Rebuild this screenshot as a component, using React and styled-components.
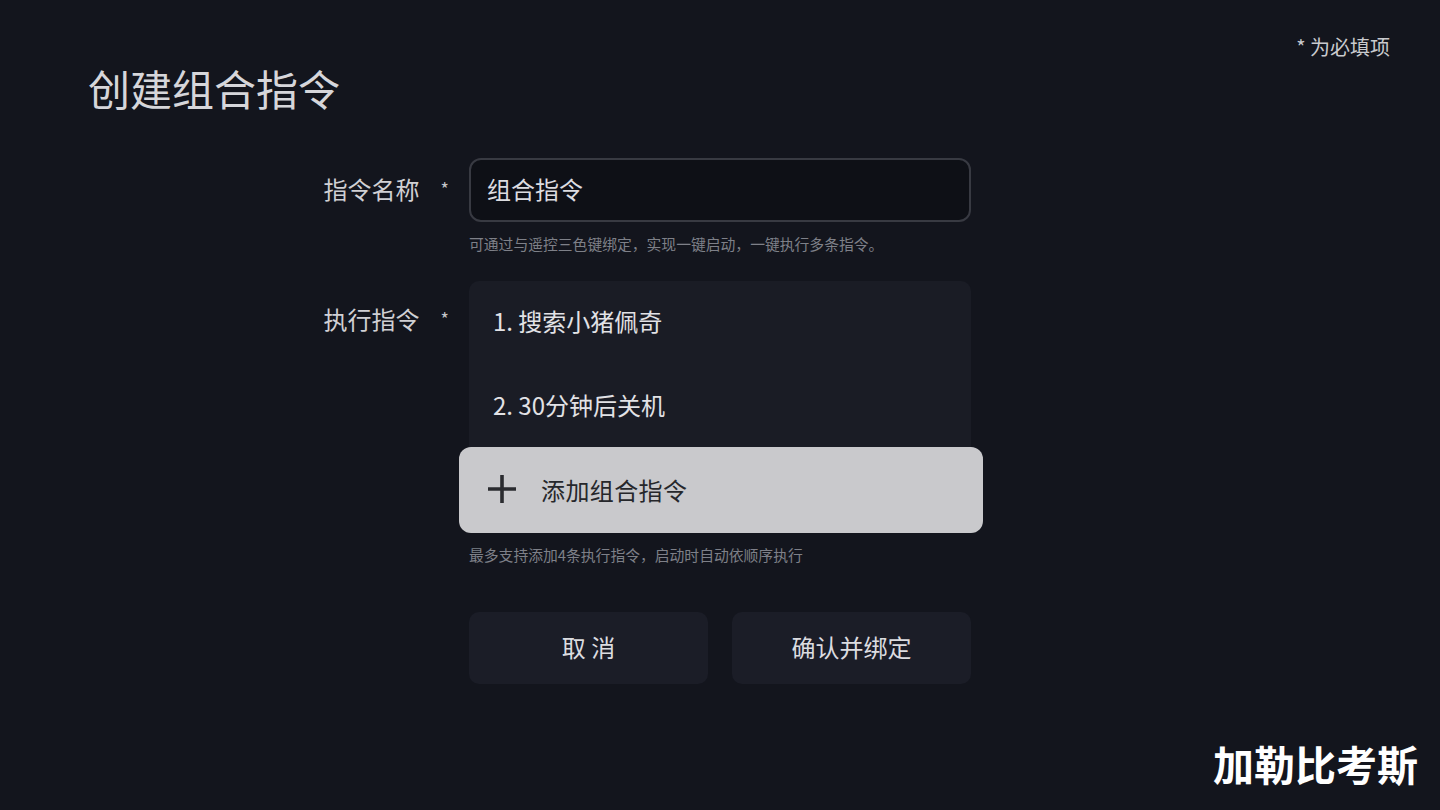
import * as React from "react"
import styled, { createGlobalStyle } from "styled-components"

const GlobalStyle = createGlobalStyle`
  html, body {
    margin: 0;
    padding: 0;
    background: #13151d;
  }
  body {
    font-family: "Noto Sans CJK SC", "Noto Sans", sans-serif;
  }
`

const Page = styled.div`
  position: relative;
  width: 1440px;
  height: 810px;
  overflow: hidden;
  background: #13151d;
  color: #d4d4d8;
`
const TopBar = styled.div`
  display: flex;
  justify-content: flex-end;
  padding: 34px 50px 0 0;
  font-size: 20px;
  line-height: 26px;
  color: #c9cace;
`
const Title = styled.h1`
  margin: 3px 0 0 88px;
  font-size: 42px;
  line-height: 50px;
  font-weight: 400;
  color: #d6d6da;
`
const Form = styled.div`
  display: grid;
  grid-template-columns: 1fr 502px 1fr;
  margin-top: 45px;
`
const LabelCell = styled.div`
  grid-column: 1;
  display: flex;
  justify-content: flex-end;
  align-items: center;
  align-self: start;
  box-sizing: border-box;
  height: ${({ $height }) => $height}px;
  padding: 0 20px 4px 0;
  font-size: 24px;
  color: #d0d0d4;
`
const Star = styled.span`
  margin-left: 21px;
  font-size: 18px;
  color: #c4c5ca;
`
const Field = styled.div`
  grid-column: 2;
  display: flex;
  flex-direction: column;
  margin-bottom: ${({ $gap }) => $gap || 0}px;
`
const Input = styled.div`
  box-sizing: border-box;
  height: 64px;
  display: flex;
  align-items: center;
  padding: 0 0 3px 16px;
  border: 2px solid #383a42;
  border-radius: 12px;
  background: #0e1016;
  font-size: 24px;
  color: #dcdce0;
`
const Hint = styled.div`
  margin-top: 12px;
  font-size: 14.8px;
  line-height: 20px;
  color: #7e8088;
`
const List = styled.div`
  display: flex;
  flex-direction: column;
  border-radius: 10px;
  background: #1a1c25;
`
const Item = styled.div`
  box-sizing: border-box;
  height: 84px;
  display: flex;
  align-items: center;
  padding: 0 0 5px 24px;
  font-size: 24px;
  color: #e2e2e6;
`
const AddButton = styled.div`
  box-sizing: border-box;
  height: 86px;
  margin: -2px -12px 0 -10px;
  display: flex;
  align-items: center;
  gap: 25px;
  padding: 0 0 2px 29px;
  border-radius: 12px;
  background: #c9c9cc;
  font-size: 24px;
  letter-spacing: 0.4px;
  color: #26272b;
`
const Actions = styled.div`
  grid-column: 2;
  display: flex;
  gap: 24px;
  margin-top: 47px;
`
const ActionButton = styled.div`
  box-sizing: border-box;
  width: 240px;
  height: 72px;
  display: flex;
  align-items: center;
  justify-content: center;
  padding-bottom: 3px;
  border-radius: 10px;
  background: #1b1d27;
  font-size: 24px;
  color: #dcdce0;
`
const Watermark = styled.div`
  position: absolute;
  right: 22px;
  bottom: 22px;
  font-size: 41px;
  line-height: 50px;
  font-weight: 700;
  color: #ffffff;
`

const PlusIcon = () => (
  <svg width="28" height="28" viewBox="0 0 28 28">
    <path d="M14 0V28M0 14H28" stroke="#2a2b2f" strokeWidth="3.6" />
  </svg>
)

const App = () => (
  <Page>
    <GlobalStyle />
    <TopBar>* 为必填项</TopBar>
    <Title>创建组合指令</Title>
    <Form>
      <LabelCell $height={64}>
        指令名称<Star>*</Star>
      </LabelCell>
      <Field $gap={27}>
        <Input>组合指令</Input>
        <Hint>可通过与遥控三色键绑定，实现一键启动，一键执行多条指令。</Hint>
      </Field>
      <LabelCell $height={78}>
        执行指令<Star>*</Star>
      </LabelCell>
      <Field>
        <List>
          <Item>1. 搜索小猪佩奇</Item>
          <Item>2. 30分钟后关机</Item>
          <AddButton>
            <PlusIcon />
            添加组合指令
          </AddButton>
        </List>
        <Hint>最多支持添加4条执行指令，启动时自动依顺序执行</Hint>
      </Field>
      <Actions>
        <ActionButton>取 消</ActionButton>
        <ActionButton>确认并绑定</ActionButton>
      </Actions>
    </Form>
    <Watermark>加勒比考斯</Watermark>
  </Page>
)

export default App
